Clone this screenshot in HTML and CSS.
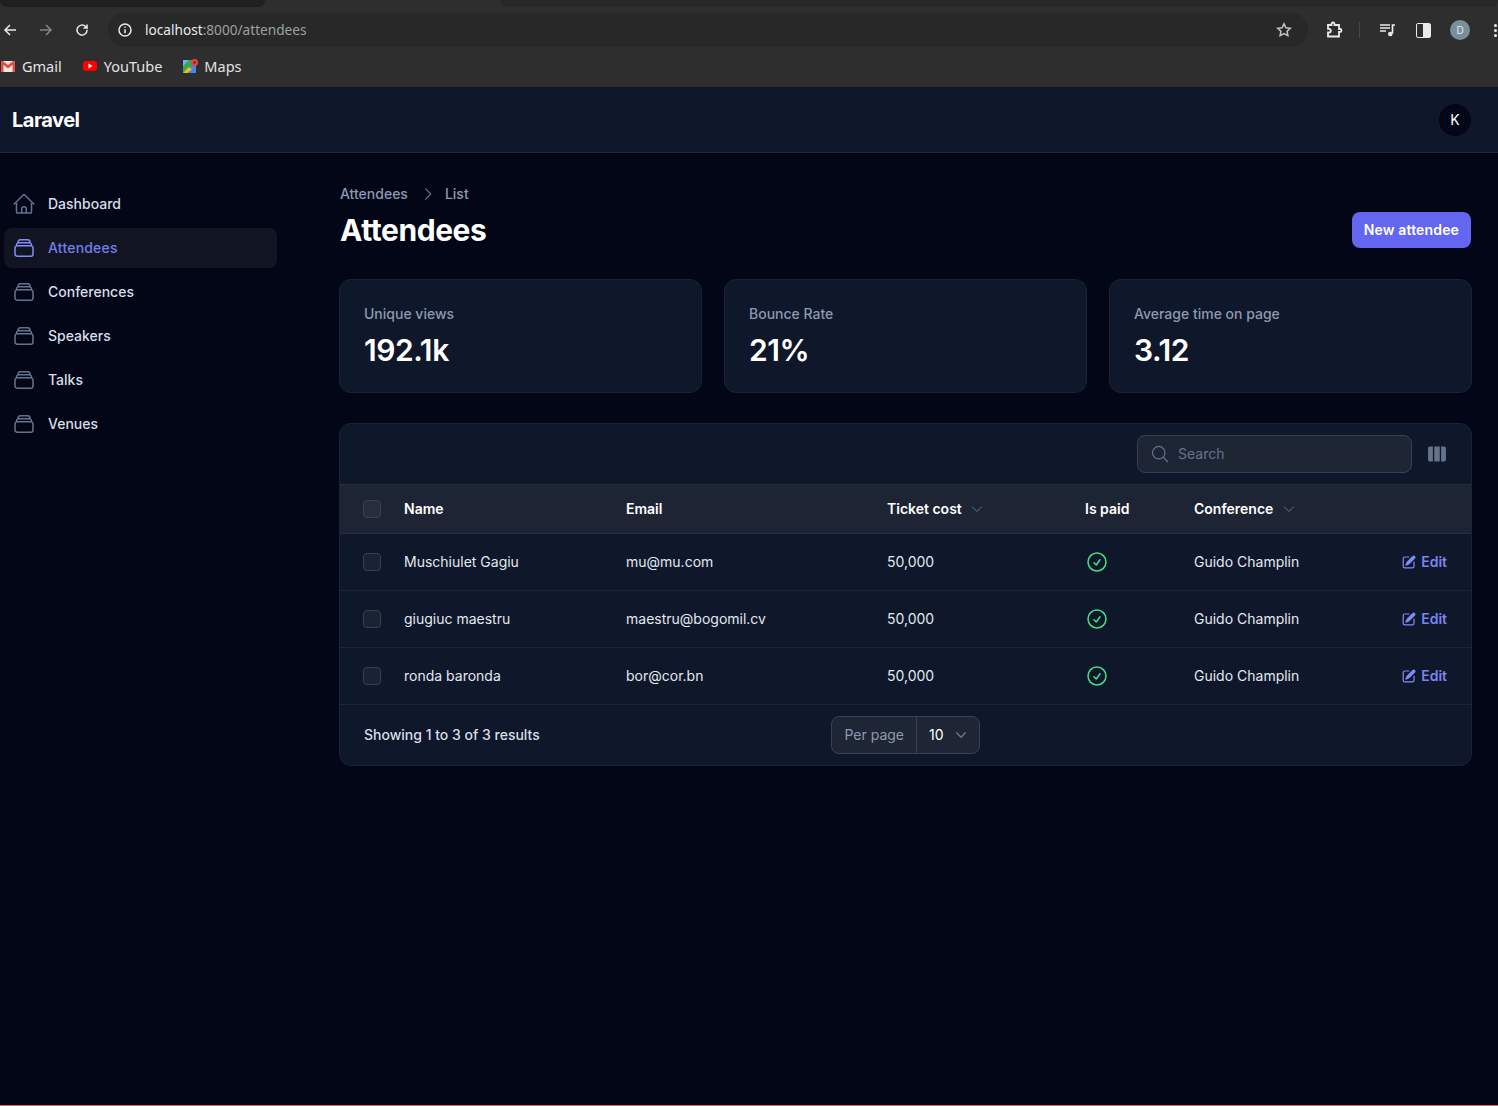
FILE: index.html
```html
<!DOCTYPE html>
<html lang="en">
<head>
  <meta charset="UTF-8">
  <meta name="viewport" content="width=device-width, initial-scale=1.0">
  <title>Attendees - Laravel</title>
  <link rel="stylesheet" href="styles.css">
</head>
<body>
  <!-- Browser chrome -->
  <div class="tabstrip">
    <div class="tab tab-first"></div>
    <div class="tab tab-second"></div>
  </div>
  <div class="toolbar">
    <svg class="chrome-icon nav-back" viewBox="0 0 16 16"><path d="M14 8H3M8 3 3 8l5 5"/></svg>
    <svg class="chrome-icon nav-forward" viewBox="0 0 16 16"><path d="M2 8h11M8 3l5 5-5 5"/></svg>
    <svg class="chrome-icon nav-reload" viewBox="0 0 16 16"><path d="M13 8a5 5 0 1 1-1.5-3.5L13 6V2.5M13 6H9.5"/></svg>
    <div class="omnibox">
      <svg class="chrome-icon info-icon" viewBox="0 0 16 16"><circle cx="8" cy="8" r="6"/><path d="M8 7.2v4M8 4.5v1.3"/></svg>
      <span class="url-host">localhost</span><span class="url-rest">:8000/attendees</span>
      <svg class="chrome-icon star-icon" viewBox="0 0 16 16"><path d="m8 1.8 1.9 4 4.4.5-3.2 3 .8 4.4L8 11.6l-3.9 2.1.8-4.4-3.2-3 4.400-.5z"/></svg>
    </div>
    <svg class="chrome-icon puzzle-icon" viewBox="0 0 18 18"><path d="M3 4h3.5V3a1.500 1.500 0 0 1 3 0v1H14v4h1a1.500 1.500 0 0 1 0 3h-1v4.500H3v-4h1a1.800 1.800 0 0 0 0-3.600H3z"/></svg>
    <div class="toolbar-sep"></div>
    <svg class="chrome-icon media-icon" viewBox="0 0 18 18"><path d="M2 4h10M2 7h10M2 10h6M14.500 12.500V4H17"/><circle class="icon-solid" cx="12.300" cy="13" r="2.300"/></svg>
    <div class="side-panel-icon"><span></span></div>
    <div class="chrome-avatar">D</div>
    <div class="chrome-menu"><span></span><span></span><span></span></div>
  </div>
  <div class="bookmarks">
    <a class="bookmark">
      <svg class="fav" viewBox="0 0 16 16"><rect x="1" y="3" width="14" height="11" rx="1" fill="#f4e4e2"/><path d="M1 4v9q0 1 1 1h1.500V7L8 10.500 12.500 7v7H14q1 0 1-1V4q-.2-1.500-2-1L8 7 3 3Q1.200 2.500 1 4z" fill="#d9534a"/></svg>
      Gmail
    </a>
    <a class="bookmark">
      <svg class="fav" viewBox="0 0 16 16"><rect x="1" y="3" width="14" height="10" rx="3" fill="#f00"/><path d="m6.500 5.500 4 2.500-4 2.500z" fill="#fff"/></svg>
      YouTube
    </a>
    <a class="bookmark">
      <svg class="fav" viewBox="0 0 16 16"><rect x="1" y="2" width="13" height="13" fill="#34a853"/><path d="M1 15 14 5v10z" fill="#4285f4"/><path d="M1 15l6-6 3 2.500L5 15z" fill="#fbbc04"/><path d="M1 2h6L1 8z" fill="#7baaf7"/><circle cx="12.500" cy="4.500" r="3.500" fill="#ea4335"/><circle cx="12.500" cy="4.500" r="1.200" fill="#7a1f18"/></svg>
      Maps
    </a>
  </div>

  <!-- App top bar -->
  <header class="topbar">
    <div class="brand">Laravel</div>
    <div class="user-avatar">K</div>
  </header>

  <div class="layout">
    <aside class="sidebar">
      <a class="nav-item">
        <svg class="nav-icon" viewBox="0 0 24 24"><path d="M2.25 12l8.954-8.955c.44-.439 1.152-.439 1.591 0L21.75 12M4.5 9.75v10.125c0 .621.504 1.125 1.125 1.125H9.75v-4.875c0-.621.504-1.125 1.125-1.125h2.25c.621 0 1.125.504 1.125 1.125V21h4.125c.621 0 1.125-.504 1.125-1.125V9.75M8.25 21h8.25"/></svg>
        Dashboard
      </a>
      <a class="nav-item active">
        <svg class="nav-icon" viewBox="0 0 24 24"><path d="M6 6.878V6a2.25 2.25 0 012.25-2.25h7.5A2.25 2.25 0 0118 6v.878m-12 0c.235-.083.487-.128.75-.128h10.5c.263 0 .515.045.75.128m-12 0A2.25 2.25 0 004.5 9v.878m13.5-3A2.25 2.25 0 0119.5 9v.878m0 0a2.246 2.246 0 00-.75-.128H5.25c-.263 0-.515.045-.75.128m15 0A2.25 2.25 0 0121 12v6a2.25 2.25 0 01-2.25 2.25H5.25A2.25 2.25 0 013 18v-6c0-.98.626-1.813 1.5-2.122"/></svg>
        Attendees
      </a>
      <a class="nav-item">
        <svg class="nav-icon" viewBox="0 0 24 24"><path d="M6 6.878V6a2.25 2.25 0 012.25-2.25h7.5A2.25 2.25 0 0118 6v.878m-12 0c.235-.083.487-.128.75-.128h10.5c.263 0 .515.045.75.128m-12 0A2.25 2.25 0 004.5 9v.878m13.5-3A2.25 2.25 0 0119.5 9v.878m0 0a2.246 2.246 0 00-.75-.128H5.25c-.263 0-.515.045-.75.128m15 0A2.25 2.25 0 0121 12v6a2.25 2.25 0 01-2.25 2.25H5.25A2.25 2.25 0 013 18v-6c0-.98.626-1.813 1.5-2.122"/></svg>
        Conferences
      </a>
      <a class="nav-item">
        <svg class="nav-icon" viewBox="0 0 24 24"><path d="M6 6.878V6a2.25 2.25 0 012.25-2.25h7.5A2.25 2.25 0 0118 6v.878m-12 0c.235-.083.487-.128.75-.128h10.5c.263 0 .515.045.75.128m-12 0A2.25 2.25 0 004.5 9v.878m13.5-3A2.25 2.25 0 0119.5 9v.878m0 0a2.246 2.246 0 00-.75-.128H5.25c-.263 0-.515.045-.75.128m15 0A2.25 2.25 0 0121 12v6a2.25 2.25 0 01-2.25 2.25H5.25A2.25 2.25 0 013 18v-6c0-.98.626-1.813 1.5-2.122"/></svg>
        Speakers
      </a>
      <a class="nav-item">
        <svg class="nav-icon" viewBox="0 0 24 24"><path d="M6 6.878V6a2.25 2.25 0 012.25-2.25h7.5A2.25 2.25 0 0118 6v.878m-12 0c.235-.083.487-.128.75-.128h10.5c.263 0 .515.045.75.128m-12 0A2.25 2.25 0 004.5 9v.878m13.5-3A2.25 2.25 0 0119.5 9v.878m0 0a2.246 2.246 0 00-.75-.128H5.25c-.263 0-.515.045-.75.128m15 0A2.25 2.25 0 0121 12v6a2.25 2.25 0 01-2.25 2.25H5.25A2.25 2.25 0 013 18v-6c0-.98.626-1.813 1.5-2.122"/></svg>
        Talks
      </a>
      <a class="nav-item">
        <svg class="nav-icon" viewBox="0 0 24 24"><path d="M6 6.878V6a2.25 2.25 0 012.25-2.25h7.5A2.25 2.25 0 0118 6v.878m-12 0c.235-.083.487-.128.75-.128h10.5c.263 0 .515.045.75.128m-12 0A2.25 2.25 0 004.5 9v.878m13.5-3A2.25 2.25 0 0119.5 9v.878m0 0a2.246 2.246 0 00-.75-.128H5.25c-.263 0-.515.045-.75.128m15 0A2.25 2.25 0 0121 12v6a2.25 2.25 0 01-2.25 2.25H5.25A2.25 2.25 0 013 18v-6c0-.98.626-1.813 1.5-2.122"/></svg>
        Venues
      </a>
    </aside>

    <main class="content">
      <div class="breadcrumbs">
        <span>Attendees</span>
        <svg class="crumb-sep" viewBox="0 0 24 24"><path d="M8.25 4.5l7.5 7.5-7.5 7.5"/></svg>
        <span>List</span>
      </div>
      <div class="page-header">
        <h1>Attendees</h1>
        <button class="btn-primary">New attendee</button>
      </div>

      <div class="stats">
        <div class="stat-card">
          <div class="stat-label">Unique views</div>
          <div class="stat-value">192.1k</div>
        </div>
        <div class="stat-card">
          <div class="stat-label">Bounce Rate</div>
          <div class="stat-value">21%</div>
        </div>
        <div class="stat-card">
          <div class="stat-label">Average time on page</div>
          <div class="stat-value">3.12</div>
        </div>
      </div>

      <section class="table-card">
        <div class="table-toolbar">
          <div class="search-box">
            <svg class="search-icon" viewBox="0 0 24 24"><path d="M21 21l-5.197-5.197m0 0A7.5 7.5 0 105.196 5.196a7.5 7.5 0 0010.607 10.607z"/></svg>
            <span>Search</span>
          </div>
          <svg class="columns-icon" viewBox="0 0 24 24"><path d="M15 3.75H9v16.5h6V3.75zM16.5 20.25h3.375c1.035 0 1.875-.84 1.875-1.875V5.625c0-1.036-.84-1.875-1.875-1.875H16.5v16.5zM4.125 3.75H7.5v16.5H4.125a1.875 1.875 0 01-1.875-1.875V5.625c0-1.036.84-1.875 1.875-1.875z"/></svg>
        </div>
        <table class="data-table">
          <colgroup>
            <col class="col-check"><col class="col-name"><col class="col-email"><col class="col-cost"><col class="col-paid"><col class="col-conf"><col>
          </colgroup>
          <thead>
            <tr>
              <th><span class="checkbox"></span></th>
              <th>Name</th>
              <th>Email</th>
              <th>Ticket cost <svg class="sort-icon" viewBox="0 0 24 24"><path d="M19.5 8.25l-7.5 7.5-7.5-7.5"/></svg></th>
              <th>Is paid</th>
              <th>Conference <svg class="sort-icon" viewBox="0 0 24 24"><path d="M19.5 8.25l-7.5 7.5-7.5-7.5"/></svg></th>
              <th></th>
            </tr>
          </thead>
          <tbody>
            <tr>
              <td><span class="checkbox"></span></td>
              <td>Muschiulet Gagiu</td>
              <td>mu@mu.com</td>
              <td>50,000</td>
              <td><svg class="paid-icon" viewBox="0 0 24 24"><path d="M9 12.75L11.25 15 15 9.75M21 12a9 9 0 11-18 0 9 9 0 0118 0z"/></svg></td>
              <td>Guido Champlin</td>
              <td class="cell-action"><a class="edit-link"><svg class="edit-icon" viewBox="0 0 20 20"><path d="M5.433 13.917l1.262-3.155A4 4 0 017.58 9.42l6.92-6.918a2.121 2.121 0 013 3l-6.92 6.918c-.383.383-.84.685-1.343.886l-3.154 1.262a.5.5 0 01-.65-.65z"/><path d="M3.5 5.75c0-.69.56-1.25 1.25-1.25H10A.75.75 0 0010 3H4.75A2.75 2.75 0 002 5.75v9.5A2.75 2.75 0 004.75 18h9.5A2.75 2.75 0 0017 15.25V10a.75.75 0 00-1.5 0v5.25c0 .69-.56 1.25-1.25 1.25h-9.5c-.69 0-1.25-.56-1.25-1.25v-9.5z"/></svg>Edit</a></td>
            </tr>
            <tr>
              <td><span class="checkbox"></span></td>
              <td>giugiuc maestru</td>
              <td>maestru@bogomil.cv</td>
              <td>50,000</td>
              <td><svg class="paid-icon" viewBox="0 0 24 24"><path d="M9 12.75L11.25 15 15 9.75M21 12a9 9 0 11-18 0 9 9 0 0118 0z"/></svg></td>
              <td>Guido Champlin</td>
              <td class="cell-action"><a class="edit-link"><svg class="edit-icon" viewBox="0 0 20 20"><path d="M5.433 13.917l1.262-3.155A4 4 0 017.58 9.42l6.92-6.918a2.121 2.121 0 013 3l-6.92 6.918c-.383.383-.84.685-1.343.886l-3.154 1.262a.5.5 0 01-.65-.65z"/><path d="M3.5 5.75c0-.69.56-1.25 1.25-1.25H10A.75.75 0 0010 3H4.75A2.75 2.75 0 002 5.75v9.5A2.75 2.75 0 004.75 18h9.5A2.75 2.75 0 0017 15.25V10a.75.75 0 00-1.5 0v5.25c0 .69-.56 1.25-1.25 1.25h-9.5c-.69 0-1.25-.56-1.25-1.25v-9.5z"/></svg>Edit</a></td>
            </tr>
            <tr>
              <td><span class="checkbox"></span></td>
              <td>ronda baronda</td>
              <td>bor@cor.bn</td>
              <td>50,000</td>
              <td><svg class="paid-icon" viewBox="0 0 24 24"><path d="M9 12.75L11.25 15 15 9.75M21 12a9 9 0 11-18 0 9 9 0 0118 0z"/></svg></td>
              <td>Guido Champlin</td>
              <td class="cell-action"><a class="edit-link"><svg class="edit-icon" viewBox="0 0 20 20"><path d="M5.433 13.917l1.262-3.155A4 4 0 017.58 9.42l6.92-6.918a2.121 2.121 0 013 3l-6.92 6.918c-.383.383-.84.685-1.343.886l-3.154 1.262a.5.5 0 01-.65-.65z"/><path d="M3.5 5.75c0-.69.56-1.25 1.25-1.25H10A.75.75 0 0010 3H4.75A2.75 2.75 0 002 5.75v9.5A2.75 2.75 0 004.75 18h9.5A2.75 2.75 0 0017 15.25V10a.75.75 0 00-1.5 0v5.25c0 .69-.56 1.25-1.25 1.25h-9.5c-.69 0-1.25-.56-1.25-1.25v-9.5z"/></svg>Edit</a></td>
            </tr>
          </tbody>
        </table>
        <div class="table-footer">
          <div class="results">Showing 1 to 3 of 3 results</div>
          <div class="per-page">
            <span class="per-page-label">Per page</span>
            <span class="per-page-value">10
              <svg class="per-page-chevron" viewBox="0 0 20 20"><path d="M5.23 7.21a.75.75 0 011.06.02L10 11.168l3.71-3.938a.75.75 0 111.08 1.04l-4.25 4.5a.75.75 0 01-1.08 0l-4.25-4.5a.75.75 0 01.02-1.06z"/></svg>
            </span>
          </div>
          <div></div>
        </div>
      </section>
    </main>
  </div>
</body>
</html>
```

FILE: styles.css
```css
/* Basic page */
* {
  box-sizing: border-box;
}
html, body {
  margin: 0;
  padding: 0;
  height: 1106px;
  overflow: hidden;
}
body {
  display: flex;
  flex-direction: column;
  background: #020617;
  color: #e2e8f0;
  font-family: Inter, "Liberation Sans", sans-serif;
  font-size: 14px;
  line-height: 20px;
}

/* Browser chrome */
.tabstrip {
  display: flex;
  flex: none;
  height: 13px;
  background: #2e2e2e;
}
.tab {
  height: 7px;
  background: #1f1f1f;
  border-radius: 0 0 10px 10px;
}
.tab-first {
  width: 265px;
}
.tab-second {
  margin-left: 235px;
  flex: 1;
  background: #282828;
}
.toolbar {
  display: flex;
  flex: none;
  align-items: center;
  height: 34px;
  background: #2e2e2e;
}
.chrome-icon {
  width: 16px;
  height: 16px;
  fill: none;
  stroke: #e8eaed;
  stroke-width: 1.5;
  flex: none;
}
.nav-back {
  margin-left: 2px;
}
.nav-forward {
  margin-left: 20px;
  stroke: #83868a;
}
.nav-reload {
  margin-left: 20px;
}
.omnibox {
  display: flex;
  align-items: center;
  width: 1200px;
  height: 34px;
  margin-left: 18px;
  padding-left: 9px;
  background: #282828;
  border-radius: 17px;
  font-family: "Noto Sans", sans-serif;
  font-size: 13.65px;
}
.info-icon {
  margin-right: 12px;
}
.url-host {
  color: #e8eaed;
}
.url-rest {
  color: #9aa0a6;
}
.star-icon {
  margin-left: auto;
  margin-right: 16px;
  stroke: #c4c7c5;
}
.puzzle-icon {
  width: 18px;
  height: 18px;
  margin-left: 17px;
  stroke-width: 1.8;
}
.toolbar-sep {
  width: 1px;
  height: 16px;
  margin-left: 16px;
  background: #474747;
}
.media-icon {
  width: 18px;
  height: 18px;
  margin-left: 18px;
  stroke-width: 1.7;
}
.icon-solid {
  fill: #e8eaed;
  stroke: none;
}
.side-panel-icon {
  display: flex;
  justify-content: flex-end;
  width: 15px;
  height: 15px;
  margin-left: 20px;
  border: 1.5px solid #e8eaed;
  border-radius: 2px;
}
.side-panel-icon span {
  width: 7px;
  background: #e8eaed;
}
.chrome-avatar {
  width: 20px;
  height: 20px;
  margin-left: 19px;
  border-radius: 50%;
  background: #78909c;
  color: #e8eaed;
  font-size: 10px;
  line-height: 20px;
  text-align: center;
}
.chrome-menu {
  display: flex;
  flex-direction: column;
  gap: 2px;
  margin-left: 24px;
}
.chrome-menu span {
  width: 3px;
  height: 3px;
  border-radius: 50%;
  background: #e8eaed;
}
.bookmarks {
  display: flex;
  flex: none;
  align-items: center;
  gap: 20px;
  height: 40px;
  padding-bottom: 2px;
  background: #2e2e2e;
  font-family: "Noto Sans", sans-serif;
  font-size: 14.5px;
  color: #e3e3e3;
}
.bookmark {
  display: flex;
  align-items: center;
  gap: 6px;
}
.fav {
  width: 16px;
  height: 16px;
}

/* Top bar */
.topbar {
  display: flex;
  flex: none;
  align-items: center;
  justify-content: space-between;
  height: 66px;
  padding: 0 27px 0 12px;
  background: #0f172a;
  border-bottom: 1px solid #1e293b;
}
.brand {
  font-size: 20px;
  font-weight: 700;
  letter-spacing: -0.5px;
  color: #fff;
}
.user-avatar {
  width: 32px;
  height: 32px;
  border-radius: 50%;
  background: #020617;
  color: #fff;
  font-size: 14px;
  line-height: 32px;
  text-align: center;
}

/* Layout */
.layout {
  display: flex;
  flex: 1;
  border-bottom: 1px solid #e25c6e;
}
.sidebar {
  display: flex;
  flex-direction: column;
  flex: none;
  gap: 4px;
  width: 339px;
  padding: 31px 62px 0 4px;
}
.nav-item {
  display: flex;
  align-items: center;
  gap: 12px;
  height: 40px;
  padding: 0 8px;
  border-radius: 8px;
  font-weight: 500;
  color: #d8dee8;
}
.nav-item.active {
  background: #111522;
  color: #737ee8;
  letter-spacing: 0.2px;
}
.nav-icon {
  width: 24px;
  height: 24px;
  fill: none;
  stroke: #64748b;
  stroke-width: 1.5;
  stroke-linecap: round;
  stroke-linejoin: round;
}
.nav-item.active .nav-icon {
  stroke: #818cf8;
}

/* Content */
.content {
  flex: 1;
  padding: 31px 26px 0 0;
}
.breadcrumbs {
  display: flex;
  align-items: center;
  margin-left: 1px;
  font-weight: 500;
  color: #8b9ab0;
}
.crumb-sep {
  width: 18px;
  height: 18px;
  margin: 0 8px 0 11px;
  fill: none;
  stroke: #64748b;
  stroke-width: 1.5;
}
.page-header {
  display: flex;
  align-items: flex-end;
  justify-content: space-between;
  margin: 8px 1px 0 1px;
}
h1 {
  margin: 0;
  font-size: 30px;
  line-height: 36px;
  font-weight: 700;
  letter-spacing: -0.42px;
  color: #fff;
}
.btn-primary {
  height: 36px;
  padding: 0 12px 2px;
  border: none;
  border-radius: 8px;
  background: #6366f1;
  color: #fff;
  font-family: inherit;
  font-size: 14px;
  font-weight: 600;
  letter-spacing: 0.15px;
}

/* Stats */
.stats {
  display: grid;
  grid-template-columns: repeat(3, 1fr);
  gap: 22px;
  margin-top: 31px;
}
.stat-card {
  padding: 24px;
  background: #0f172a;
  border: 1px solid #1a2334;
  border-radius: 12px;
}
.stat-label {
  color: #8b9ab0;
  font-weight: 500;
}
.stat-value {
  margin-top: 8px;
  font-size: 30px;
  line-height: 36px;
  font-weight: 600;
  letter-spacing: -0.4px;
  color: #fff;
}

/* Table */
.table-card {
  margin-top: 30px;
  background: #0f172a;
  border: 1px solid #1a2334;
  border-radius: 12px;
  overflow: hidden;
}
.table-toolbar {
  display: flex;
  align-items: center;
  justify-content: flex-end;
  gap: 14px;
  height: 60px;
  padding-right: 23px;
}
.search-box {
  display: flex;
  align-items: center;
  gap: 8px;
  width: 275px;
  height: 38px;
  padding-left: 12px;
  background: #1e2535;
  border: 1px solid #374151;
  border-radius: 8px;
  color: #64748b;
}
.search-icon {
  width: 20px;
  height: 20px;
  fill: none;
  stroke: #64748b;
  stroke-width: 1.5;
  stroke-linecap: round;
  stroke-linejoin: round;
}
.columns-icon {
  width: 22px;
  height: 22px;
  fill: #64748b;
}
.data-table {
  width: 100%;
  table-layout: fixed;
  border-collapse: collapse;
}
.col-check {
  width: 64px;
}
.col-name {
  width: 222px;
}
.col-email {
  width: 261px;
}
.col-cost {
  width: 198px;
}
.col-paid {
  width: 109px;
}
.col-conf {
  width: 190px;
}
.data-table th {
  height: 49px;
  padding: 0;
  background: #1d2433;
  border-top: 1px solid #262f40;
  border-bottom: 1px solid #262f40;
  text-align: left;
  font-weight: 600;
  color: #fff;
}
.data-table td {
  height: 57px;
  padding: 0;
  border-bottom: 1px solid #1d2535;
  color: #e2e8f0;
}
.data-table th:first-child,
.data-table td:first-child {
  padding-left: 23px;
}
.checkbox {
  display: block;
  width: 18px;
  height: 18px;
  background: #1b2232;
  border: 1px solid #374151;
  border-radius: 4px;
}
.data-table th .checkbox {
  background: #262d3e;
}
.sort-icon {
  width: 16px;
  height: 16px;
  margin-left: 4px;
  fill: none;
  stroke: #64748b;
  stroke-width: 1.5;
  vertical-align: -3px;
}
.paid-icon {
  display: block;
  width: 24px;
  height: 24px;
  fill: none;
  stroke: #4ade80;
  stroke-width: 1.5;
  stroke-linecap: round;
  stroke-linejoin: round;
}
.data-table .cell-action {
  padding-right: 24px;
}
.edit-link {
  display: flex;
  align-items: center;
  justify-content: flex-end;
  gap: 4px;
  color: #7b84f0;
  font-weight: 600;
}
.edit-icon {
  width: 16px;
  height: 16px;
  fill: #818cf8;
}
.table-footer {
  display: grid;
  grid-template-columns: 1fr auto 1fr;
  align-items: center;
  height: 60px;
  padding: 0 24px;
}
.results {
  font-weight: 500;
  color: #d8dee8;
}
.per-page {
  display: flex;
  height: 38px;
  background: #1e2535;
  border: 1px solid #374151;
  border-radius: 8px;
}
.per-page-label {
  padding: 0 12px;
  line-height: 36px;
  color: #8b9ab0;
  border-right: 1px solid #374151;
}
.per-page-value {
  display: flex;
  align-items: center;
  gap: 7px;
  padding: 0 8px 0 12px;
  color: #fff;
}
.per-page-chevron {
  width: 20px;
  height: 20px;
  fill: #64748b;
}
```
